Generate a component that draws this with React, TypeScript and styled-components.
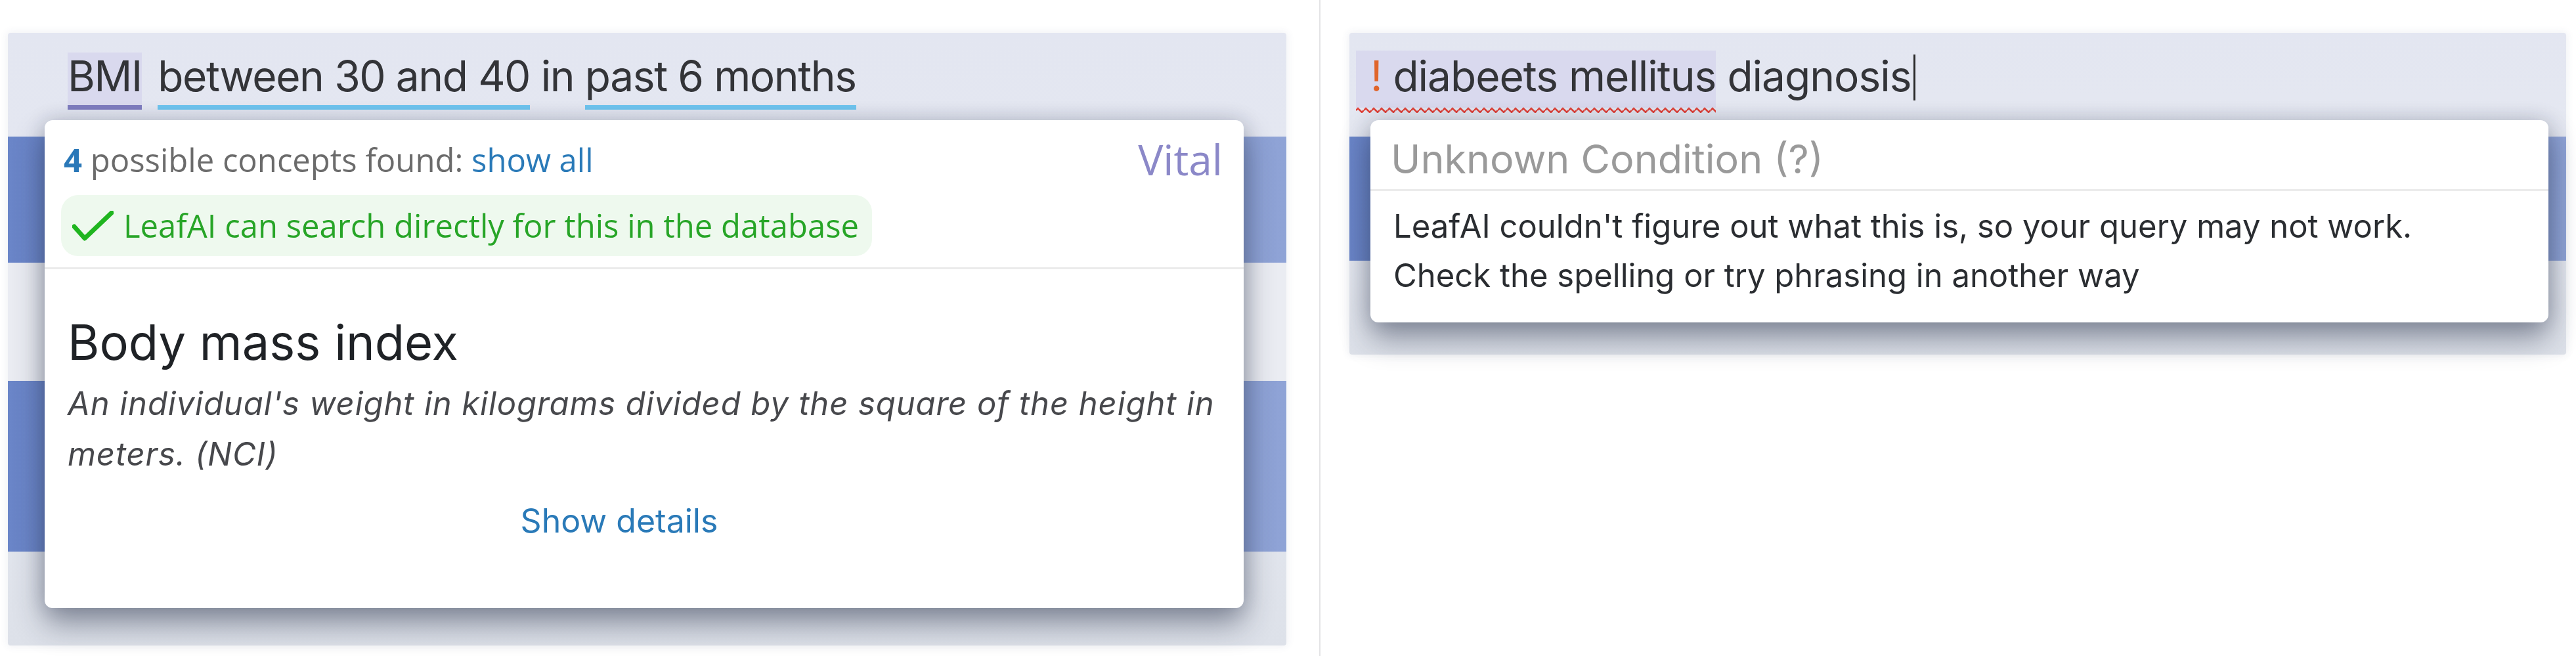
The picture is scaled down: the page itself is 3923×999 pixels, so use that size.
import React from 'react';
import styled, { createGlobalStyle } from 'styled-components';

const SF = `Inter, "Noto Sans", "Liberation Sans", sans-serif`;
const HUMANIST = `"Open Sans", "Noto Sans", "Liberation Sans", sans-serif`;

const GlobalStyle = createGlobalStyle`
  html, body {
    margin: 0;
    padding: 0;
    background: #fff;
  }
  * {
    box-sizing: border-box;
  }
`;

const App = () => {
  return (
    <>
      <GlobalStyle />
      <Page>
        <LeftHalf>
          <Panel $height={933}>
            <InputRow $tracking={-1.4}>
              <Token $highlight $underline="#7f7dc0">BMI</Token>{' '}
              <Token $underline="#6fc5ef">between 30 and 40</Token> <Token>in</Token>{' '}
              <Token $underline="#6fc5ef">past 6 months</Token>
            </InputRow>
            <Stripe $height={192} />
            <Gap $height={180} />
            <Stripe $height={260} />
            <Card $left={56} $width={1826}>
              <CardHeader>
                <CountRow>
                  <CountText>
                    <Count>4</Count> possible concepts found: <Link>show all</Link>
                  </CountText>
                  <Category>Vital</Category>
                </CountRow>
                <Badge>
                  <CheckIcon width="63" height="46" viewBox="0 0 63 46">
                    <polyline points="3,24 19,42 60,3" />
                  </CheckIcon>
                  LeafAI can search directly for this in the database
                </Badge>
              </CardHeader>
              <Rule $gap={17} />
              <CardBody>
                <ConceptName>Body mass index</ConceptName>
                <Description>
                  An individual's weight in kilograms divided by the square of the height in
                  <br />
                  meters. (NCI)
                </Description>
                <DetailsLink>Show details</DetailsLink>
              </CardBody>
            </Card>
          </Panel>
        </LeftHalf>
        <Divider />
        <RightHalf>
          <Panel $height={490}>
            <InputRow $indent={10}>
              <Misspelled>
                <Alert>!</Alert> diabeets mellitus
                <Wavy width="100%" height="10" preserveAspectRatio="none">
                  <defs>
                    <pattern id="wave" width="12" height="10" patternUnits="userSpaceOnUse">
                      <path d="M0 6 L3 3 L6 6 L9 9 L12 6" />
                    </pattern>
                  </defs>
                  <rect width="100%" height="10" fill="url(#wave)" />
                </Wavy>
              </Misspelled>{' '}
              diagnosis
              <Caret />
            </InputRow>
            <Stripe $height={189} />
            <Card $left={32} $width={1794}>
              <UnknownTitle>Unknown Condition (?)</UnknownTitle>
              <Rule $gap={0} />
              <Message>
                LeafAI couldn't figure out what this is, so your query may not work.
                <br />
                Check the spelling or try phrasing in another way
              </Message>
            </Card>
          </Panel>
        </RightHalf>
      </Page>
    </>
  );
};

export default App;

const Page = styled.div`
  display: flex;
  width: 3923px;
  height: 999px;
  background: #fff;
  font-family: ${SF};
`;

const LeftHalf = styled.div`
  width: 2009px;
  padding: 50px 50px 0 12px;
`;

const RightHalf = styled.div`
  flex: 1;
  padding: 50px 15px 0 44px;
`;

const Divider = styled.div`
  width: 2px;
  height: 100%;
  background: #e4e4e6;
`;

const Panel = styled.div<{ $height: number }>`
  position: relative;
  height: ${(p) => p.$height}px;
  display: flex;
  flex-direction: column;
  background: linear-gradient(#e3e6f1, #e6e9f1 60%, #dde1e9);
  border-radius: 4px;
  box-shadow: 0 0 12px 2px rgba(60, 70, 110, 0.07);
`;

const InputRow = styled.div<{ $indent?: number; $tracking?: number }>`
  height: 158px;
  flex-shrink: 0;
  padding: 30px 0 0 ${(p) => p.$indent ?? 91}px;
  font-size: 64px;
  line-height: 72px;
  letter-spacing: ${(p) => p.$tracking ?? -1}px;
  color: #333438;
  white-space: nowrap;
`;

const Token = styled.span<{ $highlight?: boolean; $underline?: string }>`
  display: inline-block;
  padding-bottom: 8px;
  margin-right: ${(p) => (p.$highlight ? 8 : 0)}px;
  border-bottom: 7px solid ${(p) => p.$underline ?? 'transparent'};
  background: ${(p) => (p.$highlight ? '#d9d9ee' : 'transparent')};
`;

const Misspelled = styled.span`
  position: relative;
  display: inline-block;
  padding: 3px 0 12px 22px;
  margin-top: -3px;
  background: #d9d9ee;
`;

const Wavy = styled.svg`
  position: absolute;
  left: 0;
  bottom: -8px;
  path {
    fill: none;
    stroke: #e0433a;
    stroke-width: 2.5;
  }
`;

const Alert = styled.span`
  color: #e0652b;
`;

const Caret = styled.span`
  display: inline-block;
  width: 3px;
  height: 70px;
  margin-left: 3px;
  vertical-align: -14px;
  background: #2a2a2a;
`;

const Stripe = styled.div<{ $height: number }>`
  height: ${(p) => p.$height}px;
  flex-shrink: 0;
  background: linear-gradient(90deg, #6a85c8, #7a92cf 50%, #8fa3d6);
`;

const Gap = styled.div<{ $height: number }>`
  height: ${(p) => p.$height}px;
  flex-shrink: 0;
  background: #eaecf2;
`;

const Card = styled.div<{ $left: number; $width: number }>`
  position: absolute;
  top: 133px;
  left: ${(p) => p.$left}px;
  width: ${(p) => p.$width}px;
  background: #fff;
  border-radius: 12px;
  box-shadow: 0 24px 46px rgba(30, 40, 65, 0.45), 0 0 30px rgba(30, 40, 65, 0.18);
`;

const CardHeader = styled.div`
  padding: 27px 32px 0 25px;
`;

const CountRow = styled.div`
  display: flex;
  justify-content: space-between;
  align-items: flex-start;
  font-family: ${HUMANIST};
`;

const CountText = styled.div`
  margin-left: 4px;
  font-size: 49px;
  line-height: 66px;
  color: #6b6b6b;
`;

const Count = styled.span`
  font-weight: 700;
  color: #2a78b8;
`;

const Link = styled.span`
  color: #2a7ab8;
`;

const Category = styled.div`
  font-size: 64px;
  line-height: 66px;
  color: #8b88c8;
`;

const Badge = styled.div`
  display: inline-flex;
  align-items: center;
  gap: 15px;
  height: 93px;
  margin-top: 21px;
  padding: 0 20px 0 17px;
  border-radius: 26px;
  background: #eef9ee;
  font-family: ${HUMANIST};
  font-size: 49px;
  line-height: 93px;
  color: #27a527;
`;

const CheckIcon = styled.svg`
  flex-shrink: 0;
  polyline {
    fill: none;
    stroke: #1fb51f;
    stroke-width: 7;
    stroke-linecap: round;
    stroke-linejoin: round;
  }
`;

const Rule = styled.div<{ $gap: number }>`
  margin-top: ${(p) => p.$gap}px;
  height: 3px;
  background: #ebebeb;
`;

const CardBody = styled.div`
  padding: 67px 35px 103px;
`;

const ConceptName = styled.div`
  font-size: 74px;
  line-height: 88px;
  color: #1f2226;
`;

const Description = styled.div`
  margin-top: 11px;
  font-size: 49px;
  line-height: 77px;
  font-style: italic;
  letter-spacing: 0.9px;
  color: #47484c;
`;

const DetailsLink = styled.div`
  margin-top: 33px;
  padding-right: 76px;
  text-align: center;
  font-size: 50px;
  line-height: 60px;
  color: #2a7ab8;
`;

const UnknownTitle = styled.div`
  padding: 14px 31px 0;
  font-size: 61px;
  line-height: 91px;
  color: #9a9a9a;
`;

const Message = styled.div`
  padding: 16px 35px 34px;
  font-size: 49px;
  line-height: 75px;
  color: #2a2d31;
`;
